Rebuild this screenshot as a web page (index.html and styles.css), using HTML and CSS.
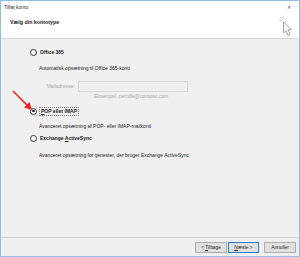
FILE: index.html
```html
<!DOCTYPE html>
<html>
<head>
  <title>Tilføj konto</title>
  <link rel="stylesheet" href="styles.css">
</head>
<body>
  <div class="window">
    <div class="titlebar">
      <span>Tilføj konto</span>
      <span class="close">&#x2715;</span>
    </div>
    <div class="header">
      <h3>Vælg din kontotype</h3>
      <svg class="cursor" width="14" height="22" viewBox="0 0 14 22">
        <g stroke="#c8c8c8" stroke-width="0.8">
          <line x1="4" y1="1" x2="4" y2="5"/><line x1="0" y1="5" x2="3" y2="6"/>
          <line x1="8" y1="3" x2="6" y2="5"/><line x1="1" y1="1.5" x2="3" y2="4"/>
          <line x1="8" y1="7" x2="5.5" y2="6.5"/>
        </g>
        <path d="M4.5 7 L4.5 18 L7 15.5 L9 20.5 L11 19.5 L9 14.8 L12.5 14.8 Z" fill="#fff" stroke="#8a8a8a" stroke-width="0.8"/>
      </svg>
    </div>

    <div class="content">
      <label class="option"><span class="radio"></span><b>Office 365</b></label>
      <p class="desc">Automatisk opsætning til Office 365-konti</p>
      <div class="mail-row">
        <span class="mail-label">Mailadresse:</span>
        <span class="mail-input"></span>
      </div>
      <p class="example">Eksempel: pernille@contoso.com</p>
      <label class="option"><span class="radio checked"></span><b class="focus"><u>P</u>OP eller IMAP</b></label>
      <p class="desc">Avanceret opsætning af POP- eller IMAP-mailkonti</p>
      <label class="option exchange"><span class="radio"></span><b>Exchange <u>A</u>ctiveSync</b></label>
      <p class="desc">Avanceret opsætning for tjenester, der bruger Exchange ActiveSync</p>

      <svg class="red-arrow" width="24" height="24" viewBox="0 0 24 24">
        <line x1="2" y1="2" x2="17" y2="17" stroke="#e8231c" stroke-width="1.5"/>
        <path d="M21 21 L13 18.5 L18.5 13 Z" fill="#e8231c"/>
      </svg>
    </div>

    <div class="footer">
      <button class="btn">&lt; <u>T</u>ilbage</button>
      <button class="btn primary"><u>N</u>æste &gt;</button>
      <button class="btn cancel">Annuller</button>
    </div>
  </div>
</body>
</html>
```

FILE: styles.css
```css
body {
  margin: 0;
  font-family: "Liberation Sans", Arial, sans-serif;
  font-size: 5px;
  color: #1a1a1a;
  background: #fff;
}
.window {
  width: 300px;
  height: 257px;
  box-sizing: border-box;
  border: 1px solid #8cbfea;
  display: flex;
  flex-direction: column;
  background-color: #f0f0f0;
  position: relative;
}
.titlebar {
  height: 11px;
  background: #fff;
  display: flex;
  justify-content: space-between;
  align-items: center;
  padding: 0 8px 0 3px;
  color: #333;
}
.titlebar .close { font-size: 5px; color: #555; }

.header {
  height: 26px;
  background: #fff;
  border-bottom: 1px solid #d6d6d6;
  padding-left: 9px;
  position: relative;
}
.header h3 { margin: 0; padding-top: 6px; font-size: 5.3px; font-weight: bold; line-height: 8px; }
.cursor { position: absolute; left: 278px; top: 3px; }

/* Options */
.content { flex: 1; padding-left: 29px; position: relative; }
.option { display: flex; align-items: center; gap: 2px; height: 8px; margin-top: 9px; }
.option b { font-weight: bold; padding: 0 1px; }
.option .focus { border: 0.5px dotted #777; line-height: 7px; }
.option.exchange { margin-top: 4px; }
.radio {
  width: 5px;
  height: 5px;
  border: 0.7px solid #333;
  border-radius: 50%;
  background: #fff;
  position: relative;
}
.radio.checked::after {
  content: "";
  position: absolute;
  left: 1.2px;
  top: 1.2px;
  width: 2.6px;
  height: 2.6px;
  border-radius: 50%;
  background: #222;
}
.desc { margin: 8px 0 0 9px; line-height: 8px; }
.content .desc:nth-of-type(2), .content .desc:nth-of-type(3) { margin-top: 7px; }
.content .desc:last-of-type { margin-top: 9px; }

.mail-row { display: flex; align-items: center; margin-top: 9px; height: 10px; }
.mail-label { width: 45px; text-align: right; color: #a8a8a8; padding-right: 3px; }
.mail-input { width: 108px; height: 9px; border: 1px solid #d8d8d8; background: #f0f0f0; }
.example { margin: 1px 0 0 64px; line-height: 8px; color: #a8a8a8; }
.mail-row + .example + .option { margin-top: 7px; }

.red-arrow { position: absolute; left: 10px; top: 50px; }

/* Footer */
.footer {
  height: 19px;
  border-top: 1px solid #cfcfcf;
  display: flex;
  justify-content: flex-end;
  align-items: flex-start;
  padding: 4px 3px 0 0;
  box-sizing: border-box;
  gap: 1px;
}
.btn {
  font-family: inherit;
  font-size: 4.8px;
  width: 32px;
  height: 11px;
  padding: 0;
  border: 1px solid #adadad;
  background: #e1e1e1;
  color: #222;
}
.btn.primary { width: 31px; border-color: #1f7fd1; }
.btn.cancel { margin-left: 4px; }
```
